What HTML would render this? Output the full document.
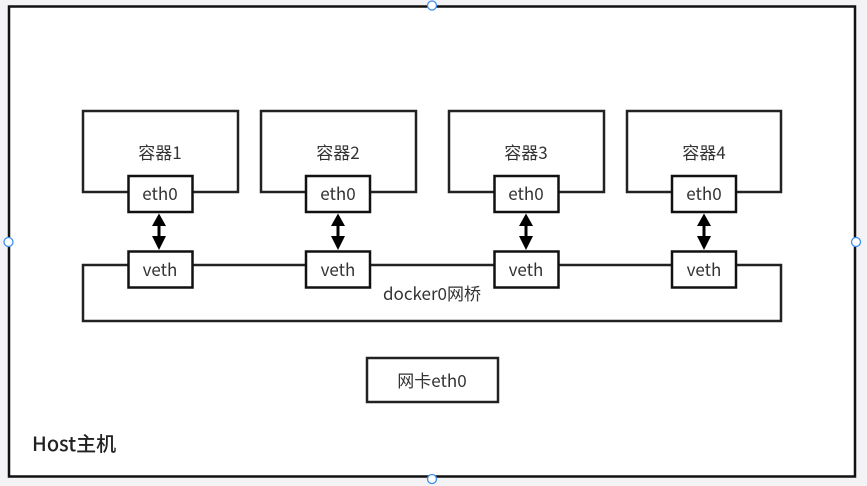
<!DOCTYPE html>
<html><head><meta charset="utf-8"><style>
html,body{margin:0;padding:0;background:#f3f3f5;width:867px;height:486px;overflow:hidden}
svg{display:block}
text{font-family:"Noto Sans CJK SC","Liberation Sans",sans-serif;fill:#333;font-size:17px;text-anchor:middle}
</style></head><body>
<svg width="867" height="486" viewBox="0 0 867 486">
<defs>
<g id="a" fill="#000"><rect x="-1.5" y="224" width="3" height="14"/><polygon points="0,213.5 7,226 -7,226"/><polygon points="0,250 7,236 -7,236"/></g>
</defs>
<rect x="9" y="6.5" width="846" height="470" fill="#fff" stroke="#111" stroke-width="2.5"/>
<g fill="none" stroke="#222" stroke-width="2.5">
<rect x="83" y="265" width="698" height="56"/>
<rect x="83" y="111" width="155" height="81"/>
<rect x="261" y="111" width="155" height="81"/>
<rect x="449" y="111" width="155" height="81"/>
<rect x="627" y="111" width="154" height="81"/>
<rect x="367" y="358" width="131" height="44"/>
</g>
<g fill="#fff" stroke="#111" stroke-width="2.5">
<rect x="128.5" y="176" width="64" height="36"/>
<rect x="306" y="176" width="64" height="36"/>
<rect x="494.5" y="176" width="64" height="36"/>
<rect x="672" y="176" width="64" height="36"/>
<rect x="128.5" y="251.5" width="64" height="36"/>
<rect x="306" y="251.5" width="64" height="36"/>
<rect x="494.5" y="251.5" width="64" height="36"/>
<rect x="672" y="251.5" width="64" height="36"/>
</g>
<use href="#a" x="159"/><use href="#a" x="338"/><use href="#a" x="526"/><use href="#a" x="704"/>
<text x="160" y="159">容器1</text>
<text x="338" y="159">容器2</text>
<text x="526" y="159">容器3</text>
<text x="704" y="159">容器4</text>
<g>
<text x="160" y="200">eth0</text><text x="338" y="200">eth0</text><text x="526" y="200">eth0</text><text x="704" y="200">eth0</text>
<text x="160" y="276">veth</text><text x="338" y="276">veth</text><text x="526" y="276">veth</text><text x="704" y="276">veth</text>
</g>
<text x="432" y="300">docker0网桥</text>
<text x="432" y="387">网卡eth0</text>
<text x="32" y="451" style="text-anchor:start;font-size:20px;font-weight:500;fill:#222">Host主机</text>
<g fill="#fff" stroke="#3b8ff0" stroke-width="1.3">
<circle cx="432" cy="5.5" r="4.5"/><circle cx="8.5" cy="242" r="4.5"/><circle cx="856" cy="242" r="4.5"/><circle cx="432" cy="479" r="4.5"/>
</g>
</svg>
</body></html>
